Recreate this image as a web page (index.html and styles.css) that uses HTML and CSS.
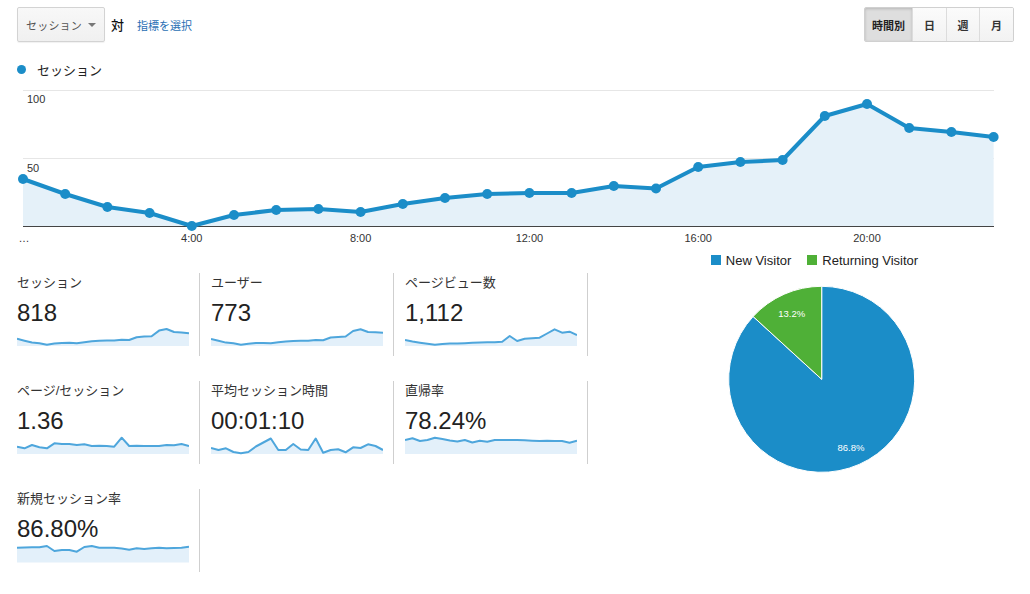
FILE: index.html
```html
<!DOCTYPE html>
<html lang="ja">
<head>
<meta charset="utf-8">
<title>セッション</title>
<link rel="stylesheet" href="styles.css">
</head>
<body>
<div class="topbar">
  <div class="tools">
    <div class="select"><span>セッション</span><i class="caret"></i></div>
    <span class="vs">対</span>
    <a class="pick">指標を選択</a>
  </div>
  <div class="btngroup">
    <span class="btn active w48">時間別</span>
    <span class="btn w34">日</span>
    <span class="btn w33">週</span>
    <span class="btn w34">月</span>
  </div>
</div>

<div class="legend"><span class="dot"></span><span>セッション</span></div>

<svg class="chart" viewBox="0 84 1030 166" width="1030" height="166">
  <line class="grid" x1="23" y1="90.5" x2="994" y2="90.5"/>
  <line class="grid" x1="23" y1="158.5" x2="994" y2="158.5"/>
  <polygon class="area" points="23,179 65.2,194 107.4,207 149.6,213 191.8,226 234,215 276.2,210 318.4,209 360.6,212 402.8,204 445,198 487.2,194 529.4,193 571.6,193 613.8,186 656,188.5 698.2,167 740.4,162 782.6,160 824.8,116 867,104 909.2,128 951.4,132 993.6,137 993.6,226 23,226"/>
  <line class="base" x1="23" y1="226.5" x2="994" y2="226.5"/>
  <polyline class="line" points="23,179 65.2,194 107.4,207 149.6,213 191.8,226 234,215 276.2,210 318.4,209 360.6,212 402.8,204 445,198 487.2,194 529.4,193 571.6,193 613.8,186 656,188.5 698.2,167 740.4,162 782.6,160 824.8,116 867,104 909.2,128 951.4,132 993.6,137"/>
  <g class="pts">
    <circle cx="23" cy="179" r="5"/><circle cx="65.2" cy="194" r="5"/><circle cx="107.4" cy="207" r="5"/><circle cx="149.6" cy="213" r="5"/>
    <circle cx="191.8" cy="226" r="5"/><circle cx="234" cy="215" r="5"/><circle cx="276.2" cy="210" r="5"/><circle cx="318.4" cy="209" r="5"/>
    <circle cx="360.6" cy="212" r="5"/><circle cx="402.8" cy="204" r="5"/><circle cx="445" cy="198" r="5"/><circle cx="487.2" cy="194" r="5"/>
    <circle cx="529.4" cy="193" r="5"/><circle cx="571.6" cy="193" r="5"/><circle cx="613.8" cy="186" r="5"/><circle cx="656" cy="188.5" r="5"/>
    <circle cx="698.2" cy="167" r="5"/><circle cx="740.4" cy="162" r="5"/><circle cx="782.6" cy="160" r="5"/><circle cx="824.8" cy="116" r="5"/>
    <circle cx="867" cy="104" r="5"/><circle cx="909.2" cy="128" r="5"/><circle cx="951.4" cy="132" r="5"/><circle cx="993.6" cy="137" r="5"/>
  </g>
  <g class="axis">
    <text x="27" y="103">100</text>
    <text x="27" y="172">50</text>
    <text x="24" y="242" text-anchor="middle">…</text>
    <text x="191.8" y="242" text-anchor="middle">4:00</text>
    <text x="360.6" y="242" text-anchor="middle">8:00</text>
    <text x="529.4" y="242" text-anchor="middle">12:00</text>
    <text x="698.2" y="242" text-anchor="middle">16:00</text>
    <text x="867" y="242" text-anchor="middle">20:00</text>
  </g>
</svg>

<div class="bottom">
  <div class="cards">
    <div class="card">
      <div class="label">セッション</div>
      <div class="value">818</div>
      <svg class="spark" viewBox="0 0 23 20" preserveAspectRatio="none" width="172" height="20">
        <polygon points="0,11.8 1,13.7 2,15.5 3,16.2 4,17.8 5,16.6 6,15.9 7,15.7 8,16.2 9,15.2 10,14.3 11,13.7 12,13.5 13,13.5 14,12.7 15,13 16,10.2 17,9.6 18,9.3 19,3.6 20,2 21,5 22,5.5 23,6.3 23,19 0,19"/>
        <polyline vector-effect="non-scaling-stroke" points="0,11.8 1,13.7 2,15.5 3,16.2 4,17.8 5,16.6 6,15.9 7,15.7 8,16.2 9,15.2 10,14.3 11,13.7 12,13.5 13,13.5 14,12.7 15,13 16,10.2 17,9.6 18,9.3 19,3.6 20,2 21,5 22,5.5 23,6.3"/>
      </svg>
    </div>
    <div class="card">
      <div class="label">ユーザー</div>
      <div class="value">773</div>
      <svg class="spark" viewBox="0 0 23 20" preserveAspectRatio="none" width="172" height="20">
        <polygon points="0,12 1,13.8 2,15.6 3,16.3 4,17.8 5,16.7 6,16 7,15.9 8,16.2 9,15.3 10,14.5 11,14 12,13.8 13,13.8 14,13 15,13.2 16,10.5 17,10 18,9.5 19,4 20,2.2 21,5 22,5.3 23,5.7 23,19 0,19"/>
        <polyline vector-effect="non-scaling-stroke" points="0,12 1,13.8 2,15.6 3,16.3 4,17.8 5,16.7 6,16 7,15.9 8,16.2 9,15.3 10,14.5 11,14 12,13.8 13,13.8 14,13 15,13.2 16,10.5 17,10 18,9.5 19,4 20,2.2 21,5 22,5.3 23,5.7"/>
      </svg>
    </div>
    <div class="card">
      <div class="label">ページビュー数</div>
      <div class="value">1,112</div>
      <svg class="spark" viewBox="0 0 23 20" preserveAspectRatio="none" width="172" height="20">
        <polygon points="0,13 1,14.5 2,15.7 3,16.8 4,17.8 5,17 6,16.5 7,16.5 8,16.2 9,15.8 10,15.5 11,15.3 12,15.2 13,14.7 14,9 15,14 16,11.7 17,11.2 18,10.7 19,6.5 20,2.3 21,5.7 22,4.7 23,8 23,19 0,19"/>
        <polyline vector-effect="non-scaling-stroke" points="0,13 1,14.5 2,15.7 3,16.8 4,17.8 5,17 6,16.5 7,16.5 8,16.2 9,15.8 10,15.5 11,15.3 12,15.2 13,14.7 14,9 15,14 16,11.7 17,11.2 18,10.7 19,6.5 20,2.3 21,5.7 22,4.7 23,8"/>
      </svg>
    </div>
    <div class="card">
      <div class="label">ページ/セッション</div>
      <div class="value">1.36</div>
      <svg class="spark" viewBox="0 0 23 20" preserveAspectRatio="none" width="172" height="20">
        <polygon points="0,11.7 1,13.3 2,10 3,12.3 4,13.3 5,8.3 6,9 7,9 8,10 9,9.3 10,11 11,10.7 12,11 13,11.7 14,2.7 15,11 16,10.7 17,11 18,11 19,11 20,10 21,10.3 22,9 23,11 23,19 0,19"/>
        <polyline vector-effect="non-scaling-stroke" points="0,11.7 1,13.3 2,10 3,12.3 4,13.3 5,8.3 6,9 7,9 8,10 9,9.3 10,11 11,10.7 12,11 13,11.7 14,2.7 15,11 16,10.7 17,11 18,11 19,11 20,10 21,10.3 22,9 23,11"/>
      </svg>
    </div>
    <div class="card">
      <div class="label">平均セッション時間</div>
      <div class="value">00:01:10</div>
      <svg class="spark" viewBox="0 0 23 20" preserveAspectRatio="none" width="172" height="20">
        <polygon points="0,13 1,15 2,13.3 3,17 4,18.3 5,17 6,11.5 7,7.5 8,3.5 9,15 10,15 11,9 12,14.5 13,15 14,3.5 15,17.7 16,15 17,14.3 18,17.3 19,12.3 20,13 21,9.3 22,11 23,15 23,19 0,19"/>
        <polyline vector-effect="non-scaling-stroke" points="0,13 1,15 2,13.3 3,17 4,18.3 5,17 6,11.5 7,7.5 8,3.5 9,15 10,15 11,9 12,14.5 13,15 14,3.5 15,17.7 16,15 17,14.3 18,17.3 19,12.3 20,13 21,9.3 22,11 23,15"/>
      </svg>
    </div>
    <div class="card">
      <div class="label">直帰率</div>
      <div class="value">78.24%</div>
      <svg class="spark" viewBox="0 0 23 20" preserveAspectRatio="none" width="172" height="20">
        <polygon points="0,5 1,3.3 2,6 3,5 4,2.7 5,4 6,5.5 7,6.5 8,5 9,7.5 10,5.7 11,6.7 12,5 13,5 14,5 15,5 16,5.3 17,5.7 18,6 19,5.7 20,6 21,6 22,7.7 23,5.7 23,19 0,19"/>
        <polyline vector-effect="non-scaling-stroke" points="0,5 1,3.3 2,6 3,5 4,2.7 5,4 6,5.5 7,6.5 8,5 9,7.5 10,5.7 11,6.7 12,5 13,5 14,5 15,5 16,5.3 17,5.7 18,6 19,5.7 20,6 21,6 22,7.7 23,5.7"/>
      </svg>
    </div>
    <div class="card">
      <div class="label">新規セッション率</div>
      <div class="value">86.80%</div>
      <svg class="spark" viewBox="0 0 23 20" preserveAspectRatio="none" width="172" height="20">
        <polygon points="0,4.7 1,4.5 2,4.3 3,4.3 4,3 5,8 6,7 7,7 8,8.7 9,4 10,3 11,4.7 12,4.7 13,4.7 14,5.5 15,6.7 16,5.3 17,6 18,5.3 19,4.7 20,5.3 21,5 22,4.7 23,3.7 23,19.5 0,19.5"/>
        <polyline vector-effect="non-scaling-stroke" points="0,4.7 1,4.5 2,4.3 3,4.3 4,3 5,8 6,7 7,7 8,8.7 9,4 10,3 11,4.7 12,4.7 13,4.7 14,5.5 15,6.7 16,5.3 17,6 18,5.3 19,4.7 20,5.3 21,5 22,4.7 23,3.7"/>
      </svg>
    </div>
  </div>

  <div class="piepanel">
    <div class="pielegend">
      <span class="item"><i class="sq blue"></i>New Visitor</span>
      <span class="item"><i class="sq green"></i>Returning Visitor</span>
    </div>
    <svg class="pie" viewBox="588 270 442 210" width="442" height="210">
      <path class="slice-blue" d="M821.7,379.3 L753.1,316.5 A93,93 0 1 0 821.7,286.3 Z"/>
      <path class="slice-green" d="M821.7,379.3 L821.7,286.3 A93,93 0 0 0 753.1,316.5 Z"/>
      <text x="791.7" y="316.5" text-anchor="middle">13.2%</text>
      <text x="851" y="451" text-anchor="middle">86.8%</text>
    </svg>
  </div>
</div>
</body>
</html>
```

FILE: styles.css
```css
html, body {
  margin: 0;
  padding: 0;
  background: #fff;
}
body {
  width: 1030px;
  height: 594px;
  overflow: hidden;
  font-family: "Liberation Sans", Arial, "Noto Sans CJK JP", sans-serif;
  color: #222;
}

/* top bar */
.topbar {
  display: flex;
  justify-content: space-between;
  align-items: center;
  padding: 7px 16px 0 17px;
  height: 35px;
}
.tools {
  display: flex;
  align-items: center;
}
.select {
  box-sizing: border-box;
  width: 88px;
  height: 35px;
  display: flex;
  align-items: center;
  padding-left: 8px;
  border: 1px solid #d3d3d3;
  border-radius: 2px;
  background: linear-gradient(#f8f8f8, #f0f0f0);
  box-shadow: 0 1px 1px rgba(0, 0, 0, 0.06);
  font-size: 11px;
  letter-spacing: 0.2px;
  color: #555;
}
.caret {
  margin-left: auto;
  margin-right: 8px;
  width: 0;
  height: 0;
  border-left: 4px solid transparent;
  border-right: 4px solid transparent;
  border-top: 4px solid #777;
}
.vs {
  margin-left: 6px;
  font-size: 13px;
  font-weight: 500;
  color: #111;
}
.pick {
  margin-left: 13px;
  font-size: 11px;
  color: #2a6fb4;
  cursor: pointer;
}
.btngroup {
  display: flex;
  height: 35px;
  box-sizing: border-box;
  border: 1px solid #d0d0d0;
  border-radius: 2px;
  overflow: hidden;
}
.btn {
  box-sizing: border-box;
  display: flex;
  align-items: center;
  justify-content: center;
  font-size: 11px;
  font-weight: bold;
  color: #333;
  background: linear-gradient(#fbfbfb, #f2f2f2);
  border-left: 1px solid #dcdcdc;
}
.btn:first-child { border-left: none; }
.btn.active {
  background: #dedede;
  box-shadow: inset 0 1px 3px rgba(0, 0, 0, 0.18);
  color: #222;
}
.w48 { width: 47px; }
.w34 { width: 34px; }
.w33 { width: 33px; }

/* series legend */
.legend {
  display: flex;
  align-items: center;
  height: 16px;
  margin: 19px 0 0 17px;
  font-size: 13px;
  color: #222;
}
.dot {
  width: 9px;
  height: 9px;
  border-radius: 50%;
  background: #1b8dc8;
  margin-right: 11px;
}

/* main chart */
.chart {
  display: block;
  margin-top: 7px;
}
.grid { stroke: #e6e6e6; stroke-width: 1; }
.base { stroke: #444; stroke-width: 1; }
.area { fill: #e5f1f9; }
.line {
  fill: none;
  stroke: #1b8dc8;
  stroke-width: 4;
  stroke-linejoin: round;
}
.pts circle { fill: #1b8dc8; }
.axis text {
  font-family: "Liberation Sans", Arial, sans-serif;
  font-size: 11px;
  fill: #333;
}

/* bottom */
.bottom {
  display: flex;
}
.cards {
  display: grid;
  grid-template-columns: repeat(3, 194px);
  grid-auto-rows: 83px;
  row-gap: 25px;
  margin: 23px 0 0 6px;
  align-content: start;
}
.card {
  box-sizing: border-box;
  padding: 2px 10px 0 11px;
  border-right: 1px solid #cfcfcf;
}
.label {
  font-size: 13px;
  line-height: 16px;
  height: 16px;
  color: #333;
  white-space: nowrap;
}
.value {
  margin-top: 8px;
  font-size: 24px;
  line-height: 28px;
  height: 28px;
  color: #222;
}
.spark {
  display: block;
}
.spark polygon { fill: #e3f0fa; }
.spark polyline {
  fill: none;
  stroke: #4ea6dc;
  stroke-width: 2;
  stroke-linejoin: round;
}

/* pie */
.piepanel {
  width: 442px;
}
.pielegend {
  display: flex;
  justify-content: center;
  align-items: center;
  gap: 16px;
  height: 14px;
  margin-top: 3px;
  padding-left: 11px;
  font-size: 13px;
  color: #222;
}
.item {
  display: flex;
  align-items: center;
  white-space: nowrap;
}
.sq {
  width: 10px;
  height: 10px;
  margin-right: 5px;
}
.sq.blue { background: #1b8dc8; }
.sq.green { background: #4fb037; }
.pie {
  display: block;
  margin-top: 3px;
}
.slice-blue { fill: #1b8dc8; stroke: #fff; stroke-width: 1; }
.slice-green { fill: #4fb037; stroke: #fff; stroke-width: 1; }
.pie text {
  font-family: "Liberation Sans", Arial, sans-serif;
  font-size: 9.5px;
  fill: #fff;
}
```
